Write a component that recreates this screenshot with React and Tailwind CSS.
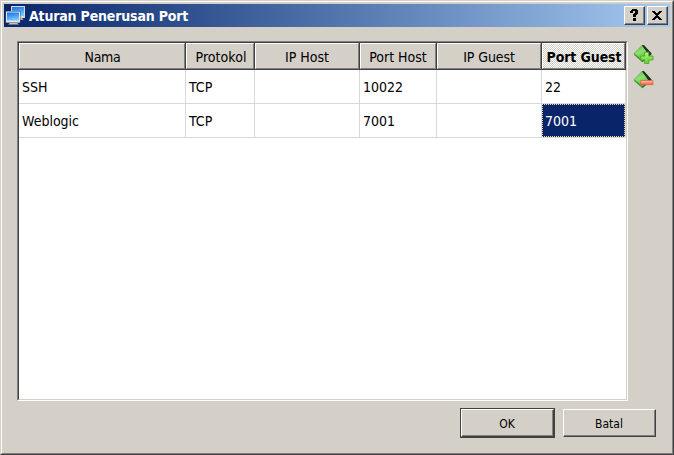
const columns = [
  { label: 'Nama', width: 'w-[167px]', spacing: 'tracking-[-0.3px] pl-px' },
  { label: 'Protokol', width: 'w-[69px]', spacing: 'tracking-[0.05px] pl-[2px]' },
  { label: 'IP Host', width: 'w-[105px]', spacing: 'tracking-[0px]' },
  { label: 'Port Host', width: 'w-[77px]', spacing: 'tracking-[0px]' },
  { label: 'IP Guest', width: 'w-[105px]', spacing: 'tracking-[-0.1px]' },
  { label: 'Port Guest', width: 'w-[84px]', spacing: 'tracking-[-0.1px] pl-px', active: true },
];

const rows = [
  ['SSH', 'TCP', '', '10022', '', '22'],
  ['Weblogic', 'TCP', '', '7001', '', '7001'],
];

function HeaderCell({ column }) {
  return (
    <div className={`${column.width} h-[27px] shrink-0 border-r border-b border-[#404040]`}>
      <div
        className={`flex h-[26px] items-center justify-center border-t border-l border-r border-b border-t-white border-l-white border-r-[#808080] border-b-[#808080] pt-[2px] text-[14px] whitespace-nowrap ${
          column.active
            ? 'bg-[repeating-conic-gradient(#ffffff_0%_25%,#d4d0c8_0%_50%)] bg-[length:2px_2px] font-bold'
            : ''
        }`}
      >
        <span className={column.spacing}>{column.label}</span>
      </div>
    </div>
  );
}

function Monitors() {
  return (
    <svg width="21" height="21" viewBox="0 0 21 21">
      <defs>
        <linearGradient id="screen" x1="0" y1="0" x2="0.3" y2="1">
          <stop offset="0" stopColor="#1a72e0" />
          <stop offset="0.5" stopColor="#3c9bf8" />
          <stop offset="1" stopColor="#7cc4ff" />
        </linearGradient>
      </defs>
      <path d="M13 13h4l1.5 2H13z" fill="#b9b9ae" />
      <rect x="6" y="1" width="14" height="12" rx="0.5" fill="#dadcdc" />
      <rect x="7" y="2" width="12" height="9" fill="url(#screen)" />
      <path d="M6 17h5l3 2.4H3z" fill="#c4c4b8" />
      <rect x="0.4" y="6" width="15" height="12" fill="#34456e" />
      <rect x="1" y="6.5" width="14" height="11" rx="0.5" fill="#e6e6e2" />
      <rect x="2" y="7.5" width="12" height="8" fill="url(#screen)" />
    </svg>
  );
}

function RuleIcon({ remove }) {
  return (
    <svg width="21" height="20" viewBox="0 0 21 20">
      <defs>
        <linearGradient id="leaf" x1="0.3" y1="0" x2="0.7" y2="1">
          <stop offset="0" stopColor="#6fc455" />
          <stop offset="0.4" stopColor="#8ee070" />
          <stop offset="1" stopColor="#3fae2a" />
        </linearGradient>
        <linearGradient id="plus" x1="0" y1="0" x2="0" y2="1">
          <stop offset="0" stopColor="#b8f088" />
          <stop offset="1" stopColor="#5ad028" />
        </linearGradient>
        <linearGradient id="minus" x1="0" y1="0" x2="0" y2="1">
          <stop offset="0" stopColor="#ffc8b4" />
          <stop offset="1" stopColor="#f05a3a" />
        </linearGradient>
      </defs>
      <path d="M0.8 9.8 9 1.2h2l7.7 9-9.2 8z" fill="#2f6a24" />
      <path d="M1.2 9.6 9 1.6l7 8.6-6.5 6.6z" fill="url(#leaf)" />
      <path d="M9 1.2h2L18.6 9.6l-2 2.4z" fill="#222d20" />
      <path d="m1 9.8 8.5 7v1.4L1 11z" fill="#48a436" />
      {remove ? (
        <rect x="7.5" y="10.5" width="12.5" height="4.2" rx="0.4" fill="url(#minus)" stroke="#e0644a" strokeWidth="0.8" />
      ) : (
        <path
          d="M11.6 8.2h4.2v3.9h4.2v3.9h-4.2v3.6h-4.2v-3.6h-4v-3.9h4z"
          fill="url(#plus)"
          stroke="#43a51e"
          strokeWidth="0.8"
        />
      )}
    </svg>
  );
}

function CaptionButton({ label, children }) {
  return (
    <button
      aria-label={label}
      className="h-[19px] w-[21px] border-t border-l border-r border-b border-t-white border-l-white border-r-[#404040] border-b-[#404040] bg-[#d4d0c8]"
    >
      <span className="flex h-[17px] w-[19px] items-center justify-center border-r border-b border-[#808080]">
        {children}
      </span>
    </button>
  );
}

export default function App() {
  return (
    <div className="h-[455px] w-[674px] border-t border-l border-r border-b border-t-[#d4d0c8] border-l-[#d4d0c8] border-r-[#404040] border-b-[#404040] bg-[#d4d0c8] font-['DejaVu_Sans_Condensed','DejaVu_Sans',sans-serif] text-[13px] text-black">
      <div className="h-[453px] border-t border-l border-r border-b border-t-white border-l-white border-r-[#808080] border-b-[#808080] p-[2px]">
        <div className="flex h-[23px] w-[666px] items-center bg-linear-to-r from-[#0a246a] to-[#a6caf0] pr-[2px] pl-[1px]">
          <Monitors />
          <h1 className="ml-[3px] pt-[2px] text-[14px] font-bold tracking-[-0.17px] whitespace-nowrap text-white">
            Aturan Penerusan Port
          </h1>
          <div className="ml-auto flex gap-[2px]">
            <CaptionButton label="?">
              <svg width="9" height="12" viewBox="0 0 9 12" shapeRendering="crispEdges">
                <path d="M1 1h1V0h5v1h1v4H7v1H6v2H3V5h1V4h1V2H3v2H0V2h1zM3 9h3v3H3z" />
              </svg>
            </CaptionButton>
            <CaptionButton label="×">
              <svg width="10" height="9" viewBox="0 0 10 9" shapeRendering="crispEdges">
                <path d="M0 0h3v1h1v1h2V1h1V0h3v1H9v1H8v1H7v1H6v1h1v1h1v1h1v1h1v1H7V8H6V7H4v1H3v1H0V8h1V7h1V6h1V5h1V4H3V3H2V2H1V1H0z" />
              </svg>
            </CaptionButton>
          </div>
        </div>

        <div className="flex pt-[14px] pl-[13px]">
          <div className="h-[360px] w-[611px] border-t border-l border-r border-b border-t-[#808080] border-l-[#808080] border-r-white border-b-white">
            <div className="h-[358px] border-t border-l border-r border-b border-t-[#404040] border-l-[#404040] border-r-[#d4d0c8] border-b-[#d4d0c8] bg-white">
              <div className="flex bg-[#d4d0c8]">
                {columns.map((column) => (
                  <HeaderCell key={column.label} column={column} />
                ))}
              </div>
              {rows.map((row, r) => (
                <div key={r} className="flex">
                  {row.map((value, c) => {
                    const selected = r === 1 && c === 5;
                    return (
                      <div
                        key={c}
                        className={`${columns[c].width} h-[34px] border-r border-b border-[#d8d8d8]`}
                      >
                        <div
                          className={`flex h-[33px] items-center pt-[2px] text-[14px] ${
                            selected
                              ? 'border border-dotted border-[#f5db95] bg-[#0a246a] pl-[2px] text-white'
                              : 'pl-[3px]'
                          }`}
                        >
                          {value}
                        </div>
                      </div>
                    );
                  })}
                </div>
              ))}
            </div>
          </div>
          <div className="flex flex-col gap-[6px] pt-[3px] pl-[5px]">
            <RuleIcon />
            <RuleIcon remove />
          </div>
        </div>

        <div className="mt-[7px] flex items-center justify-end gap-[8px] pr-[14px] text-[12px]">
          <button className="h-[30px] w-[95px] border border-[#404040]">
            <span className="flex h-[28px] items-center justify-center border-t border-l border-r border-b border-t-white border-l-white border-r-[#404040] border-b-[#404040]">
              <span className="flex h-[26px] w-full items-center justify-center border-r border-b border-[#808080] pt-[2px]">
                OK
              </span>
            </span>
          </button>
          <button className="h-[28px] w-[93px] border-t border-l border-r border-b border-t-white border-l-white border-r-[#404040] border-b-[#404040]">
            <span className="flex h-[26px] items-center justify-center border-r border-b border-[#808080] pt-[2px]">
              Batal
            </span>
          </button>
        </div>
      </div>
    </div>
  );
}
